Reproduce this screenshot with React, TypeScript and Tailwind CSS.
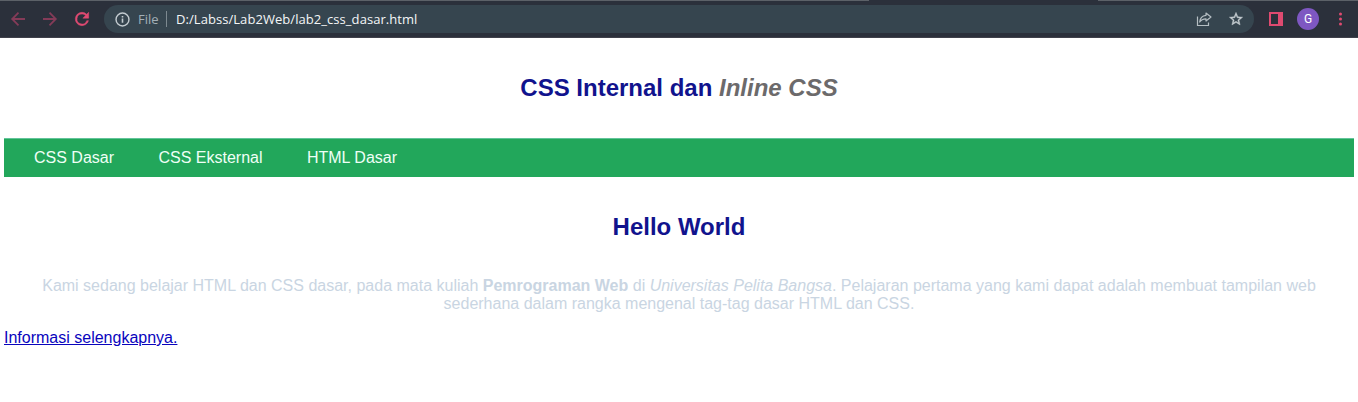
import React from 'react';

function Toolbar() {
  return (
    <header className="flex h-[38px] items-start border-b border-[#40414b] bg-[#2b303b] font-['Open_Sans','Noto_Sans',sans-serif]">
      <div className="flex w-full flex-col">
        <div className="flex h-px w-full">
          <div className="h-px w-[869px] bg-[#5c6168]" />
          <div className="h-px w-[229px] bg-[#2b303b]" />
          <div className="h-px flex-1 bg-[#5c6168]" />
        </div>
        <div className="flex h-9 w-full items-center">
          <nav className="flex w-[104px] shrink-0 items-center gap-3 pl-2">
            <svg className="size-5" viewBox="0 0 20 20" fill="none" stroke="#843b58" strokeWidth="1.8">
              <path d="M17 10H4.500M10.500 3.700L4.200 10l6.300 6.300" />
            </svg>
            <svg className="size-5" viewBox="0 0 20 20" fill="none" stroke="#843b58" strokeWidth="1.8">
              <path d="M3 10h12.500M9.500 3.700l6.300 6.300-6.300 6.300" />
            </svg>
            <svg className="size-5" viewBox="0 0 24 24" fill="#e04a72" stroke="#e04a72" strokeWidth=".6">
              <path d="M17.650 6.350A7.960 7.960 0 0 0 12 4a8 8 0 1 0 7.730 10h-2.080A6 6 0 1 1 12 6c1.660 0 3.140.690 4.220 1.780L13 11h7V4z" />
            </svg>
          </nav>
          <div className="flex h-7 w-[1150px] items-center rounded-full bg-[#36454f] pl-[11px] pr-[10px] text-[13px] leading-7">
            <svg className="size-[15px]" viewBox="0 0 16 16" fill="none" stroke="#c3cbd0" strokeWidth="1.500">
              <circle cx="8" cy="8" r="6.900" />
              <path d="M8 7v4.500M8 4.200v1.700" strokeWidth="1.700" />
            </svg>
            <span className="ml-2 w-[21px] whitespace-nowrap text-[#a3afb7]">File</span>
            <span className="ml-[7px] mr-[9px] h-4 w-px bg-[#7d8990]" />
            <span className="whitespace-nowrap tracking-[0.06px] text-[#f4f6f7]">D:/Labss/Lab2Web/lab2_css_dasar.html</span>
            <svg className="ml-auto size-4" viewBox="0 0 16 16" fill="none" stroke="#b5bec3" strokeWidth="1.200">
              <path d="M1.500 5.500v9h11v-3" />
              <path d="M10 2l5 4-5 4V7.800C7 7.800 5 8.700 3.700 11 4 7.500 6.500 4.700 10 4.300z" strokeLinejoin="round" />
            </svg>
            <svg className="ml-4 size-4" viewBox="0 0 24 24" fill="#c6cdd1">
              <path d="M22 9.240l-7.190-.620L12 2 9.190 8.630 2 9.240l5.460 4.730L5.820 21 12 17.270 18.180 21l-1.630-7.030L22 9.240zM12 15.400l-3.760 2.270 1-4.280-3.320-2.880 4.380-.380L12 6.100l1.710 4.040 4.380.380-3.320 2.880 1 4.280L12 15.400z" stroke="#c6cdd1" strokeWidth=".6" />
            </svg>
          </div>
          <svg className="ml-[15px] h-[14px] w-[14px]" viewBox="0 0 14 14">
            <path fill="#df4a70" fillRule="evenodd" d="M0 0h14v14H0zM2 2v10h7V2z" />
          </svg>
          <span className="ml-[14px] flex size-[22px] items-center justify-center rounded-full bg-[#7e57c2] font-['Roboto'] text-[12px] leading-none text-white">G</span>
          <svg className="ml-[13px] h-4 w-[17px]" viewBox="0 0 17 16" fill="#df4a70">
            <circle cx="8.500" cy="3" r="1.500" />
            <circle cx="8.500" cy="8" r="1.500" />
            <circle cx="8.500" cy="13" r="1.500" />
          </svg>
        </div>
      </div>
    </header>
  );
}

export default function App() {
  return (
    <div className="h-[402px] w-[1358px] overflow-hidden bg-white font-['Liberation_Sans',Arial,sans-serif] text-base leading-[18px]">
      <Toolbar />
      <main className="px-1">
        <h1 className="pt-9 text-center text-2xl font-bold leading-7 text-[#11138d]">
          CSS Internal dan <i className="text-[#6c6a6b]">Inline CSS</i>
        </h1>
        <nav className="mt-9 flex h-[39px] items-center gap-[44.450px] border-t border-[#62c49a] bg-[#22a75b] pl-[30px] text-[#effff6]">
          <a>CSS Dasar</a>
          <a>CSS Eksternal</a>
          <a>HTML Dasar</a>
        </nav>
        <h2 className="pt-9 text-center text-2xl font-bold leading-7 text-[#11138d]">Hello World</h2>
        <p className="mt-9 text-center text-[#c9d5e2]">
          Kami sedang belajar HTML dan CSS dasar, pada mata kuliah <b>Pemrograman Web</b> di <i>Universitas Pelita Bangsa</i>. Pelajaran pertama yang kami dapat adalah membuat tampilan web
          <br />
          sederhana dalam rangka mengenal tag-tag dasar HTML dan CSS.
        </p>
        <a className="mt-4 inline-block text-[#0904bd] underline">Informasi selengkapnya.</a>
      </main>
    </div>
  );
}
